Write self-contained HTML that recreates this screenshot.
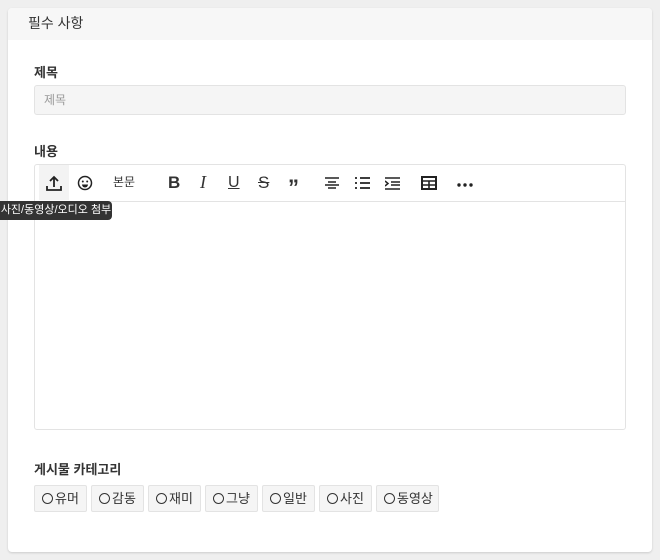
<!DOCTYPE html><html><head><meta charset="utf-8"><style>
body{margin:0;background:#efefef;font-family:"Liberation Sans","Noto Sans CJK KR",sans-serif;width:660px;height:560px;overflow:hidden;position:relative;color:#222}
.card{position:absolute;left:8px;top:8px;width:644px;height:544px;background:#fff;border-radius:4px;box-shadow:0 1px 2px rgba(0,0,0,.15)}
.hd{height:32px;background:#f7f7f7;border-radius:4px 4px 0 0;font-size:14px;line-height:30px;padding-left:20px;color:#333}
.lbl{position:absolute;left:26px;font-size:13px;font-weight:bold;color:#333}
.inp{position:absolute;left:26px;top:77px;border:1px solid #e3e3e3;border-radius:3px;background:#f5f5f5;font-size:12px;color:#999;line-height:28px;padding-left:9px;box-sizing:border-box;width:592px;height:30px}
.ed{position:absolute;left:26px;top:156px;width:592px;height:266px;border:1px solid #e3e3e3;border-radius:3px;box-sizing:border-box}
.tb{height:36px;border-bottom:1px solid #e3e3e3;position:relative}
.ic{position:absolute;top:0;height:35px;line-height:35px;font-size:15px;color:#333;text-align:center}
.tip{position:absolute;left:0;top:201px;width:112px;height:19px;background:#333;color:#fff;font-size:11px;line-height:19px;text-align:center;border-radius:0 4px 4px 0}
.bt{position:absolute;top:477px;height:27px;border:1px solid #e3e3e3;border-radius:2px;background:#f5f5f5;font-size:13px;line-height:25px;box-sizing:border-box;padding-left:7px;color:#333}
.bt i{display:inline-block;width:9px;height:9px;border:1px solid #333;border-radius:50%;margin-right:2px;vertical-align:-1px}
</style></head><body>
<div class="card"><div class="hd">필수 사항</div>
<div class="lbl" style="top:54px">제목</div>
<div class="inp">제목</div>
<div class="lbl" style="top:133px">내용</div>
<div class="ed"><div class="tb">
<div class="ic" style="left:4px;width:30px;background:#f3f3f3"><svg width="18" height="18" viewBox="0 0 18 18" style="margin-top:9px"><path d="M9 13V3M5 7l4-4 4 4M2 12v4h14v-4" fill="none" stroke="#222" stroke-width="1.8"/></svg></div>
<div class="ic" style="left:40px;width:20px"><svg width="16" height="16" viewBox="0 0 16 16" style="margin-top:10px"><circle cx="8" cy="8" r="6.5" fill="none" stroke="#222" stroke-width="1.5"/><circle cx="5.8" cy="6.5" r="1" fill="#222"/><circle cx="10.2" cy="6.5" r="1" fill="#222"/><path d="M5 9.5h6a3 3 0 0 1-6 0z" fill="#222"/></svg></div>
<div class="ic" style="left:78px;font-size:12px">본문</div>
<div class="ic" style="left:133px;font-weight:bold;font-size:17px">B</div>
<div class="ic" style="left:165px;font-family:'Liberation Serif';font-style:italic;font-size:18px">I</div>
<div class="ic" style="left:193px;text-decoration:underline;font-size:16px">U</div>
<div class="ic" style="left:223px;text-decoration:line-through;font-size:17px">S</div>
<div class="ic" style="left:253px;font-weight:bold;font-size:22px;top:5px">”</div>
<div class="ic" style="left:290px"><svg width="14" height="12" style="margin-top:12px"><path d="M0 1h14M3 5h8M0 8h14M3 11h8" stroke="#222" stroke-width="1.5"/></svg></div>
<div class="ic" style="left:320px"><svg width="15" height="12" style="margin-top:12px"><path d="M0 1h2M5 1h10M0 6h2M5 6h10M0 11h2M5 11h10" stroke="#222" stroke-width="1.8"/></svg></div>
<div class="ic" style="left:350px"><svg width="15" height="13" style="margin-top:12px"><path d="M0 1h15M6 5h9M6 8h9M0 12h15M0 4l3 2.5-3 2.5" stroke="#222" stroke-width="1.5" fill="none"/></svg></div>
<div class="ic" style="left:386px"><svg width="16" height="14" style="margin-top:11px"><rect x="1" y="1" width="14" height="12" fill="none" stroke="#222" stroke-width="2"/><path d="M1 5h14M8 5v8M1 9h14" stroke="#222" stroke-width="1.6"/></svg></div>
<div class="ic" style="left:422px"><svg width="16" height="4" style="margin-top:15px"><circle cx="2" cy="2" r="1.7" fill="#222"/><circle cx="8" cy="2" r="1.7" fill="#222"/><circle cx="14" cy="2" r="1.7" fill="#222"/></svg></div>
</div></div>
<div class="lbl" style="top:451px">게시물 카테고리</div>
<div class="bt" style="left:26px;width:53px"><i></i>유머</div>
<div class="bt" style="left:83px;width:53px"><i></i>감동</div>
<div class="bt" style="left:140px;width:53px"><i></i>재미</div>
<div class="bt" style="left:197px;width:53px"><i></i>그냥</div>
<div class="bt" style="left:254px;width:53px"><i></i>일반</div>
<div class="bt" style="left:311px;width:53px"><i></i>사진</div>
<div class="bt" style="left:368px;width:63px"><i></i>동영상</div>
</div>
<div class="tip">사진/동영상/오디오 첨부</div>
</body></html>
